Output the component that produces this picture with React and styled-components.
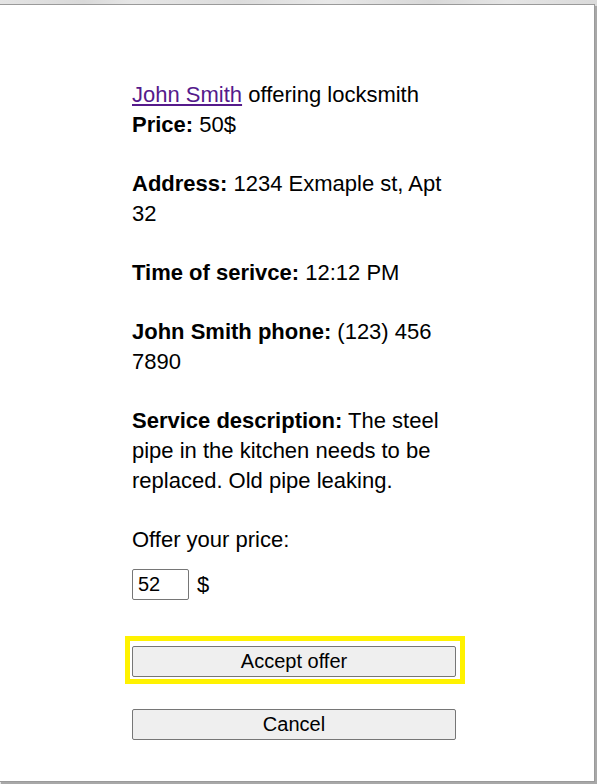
import React from 'react'
import styled, { createGlobalStyle } from 'styled-components'

const Global = createGlobalStyle`
  html, body {
    margin: 0;
    padding: 0;
    background: #e1e1e1;
    font-family: "Liberation Sans", Arial, sans-serif;
  }
`

const Backdrop = styled.div`
  height: 784px;
  padding-top: 4px;
  box-sizing: border-box;
  overflow: hidden;
  background: linear-gradient(90deg, #e4e4e4 0%, #d9d9d9 14%, #e6e6e6 22%, #dcdcdc 40%, #e8e8e8 55%, #d8d8d8 72%, #e5e5e5 85%, #dadada 100%);
`

const Modal = styled.div`
  margin-left: -1px;
  width: 596px;
  height: 778px;
  box-sizing: border-box;
  background: #fff;
  border: 1px solid #9a9a9a;
  box-shadow: 2px 2px 0 #a8a8a8;
  padding: 75px 0 0 132px;
`

const Column = styled.div`
  width: 324px;
  color: #000;
  font-size: 22px;
  line-height: 30px;
`

const Para = styled.p`
  margin: 0 0 29px;
`

const Name = styled.a`
  color: #551a8b;
  text-decoration: underline;
  cursor: pointer;
`

const PriceRow = styled.div`
  display: flex;
  align-items: center;
  gap: 8px;
  margin-top: 14px;
`

const PriceInput = styled.input`
  width: 57px;
  height: 31px;
  box-sizing: border-box;
  border: 1px solid #767676;
  border-radius: 2px;
  padding: 1px 5px;
  font-family: "Liberation Sans", Arial, sans-serif;
  font-size: 20px;
  color: #000;
  background: #fff;
`

const Focus = styled.div`
  margin: 36px -9px 0 -7px;
  border: 5px solid #fff200;
  padding: 5px 4px 2px 2px;
`

const Button = styled.button`
  display: block;
  width: 324px;
  height: 31px;
  margin: ${p => p.$gap || 0}px 0 0;
  box-sizing: border-box;
  background: #efefef;
  border: 1px solid #767676;
  border-radius: 2px;
  font-family: "Liberation Sans", Arial, sans-serif;
  font-size: 20px;
  color: #000;
  padding: 0;
`

export default function App() {
  return (
    <>
      <Global />
      <Backdrop>
        <Modal>
          <Column>
            <Para>
              <Name>John Smith</Name> offering locksmith
              <br />
              <b>Price:</b> 50$
            </Para>
            <Para>
              <b>Address:</b> 1234 Exmaple st, Apt 32
            </Para>
            <Para>
              <b>Time of serivce:</b> 12:12 PM
            </Para>
            <Para>
              <b>John Smith phone:</b> (123) 456 7890
            </Para>
            <Para>
              <b>Service description:</b> The steel pipe in the kitchen needs to be replaced. Old pipe leaking.
            </Para>
            <div>Offer your price:</div>
            <PriceRow>
              <PriceInput type="text" defaultValue="52" />
              <span>$</span>
            </PriceRow>
            <Focus>
              <Button>Accept offer</Button>
            </Focus>
            <Button $gap={25}>Cancel</Button>
          </Column>
        </Modal>
      </Backdrop>
    </>
  )
}
